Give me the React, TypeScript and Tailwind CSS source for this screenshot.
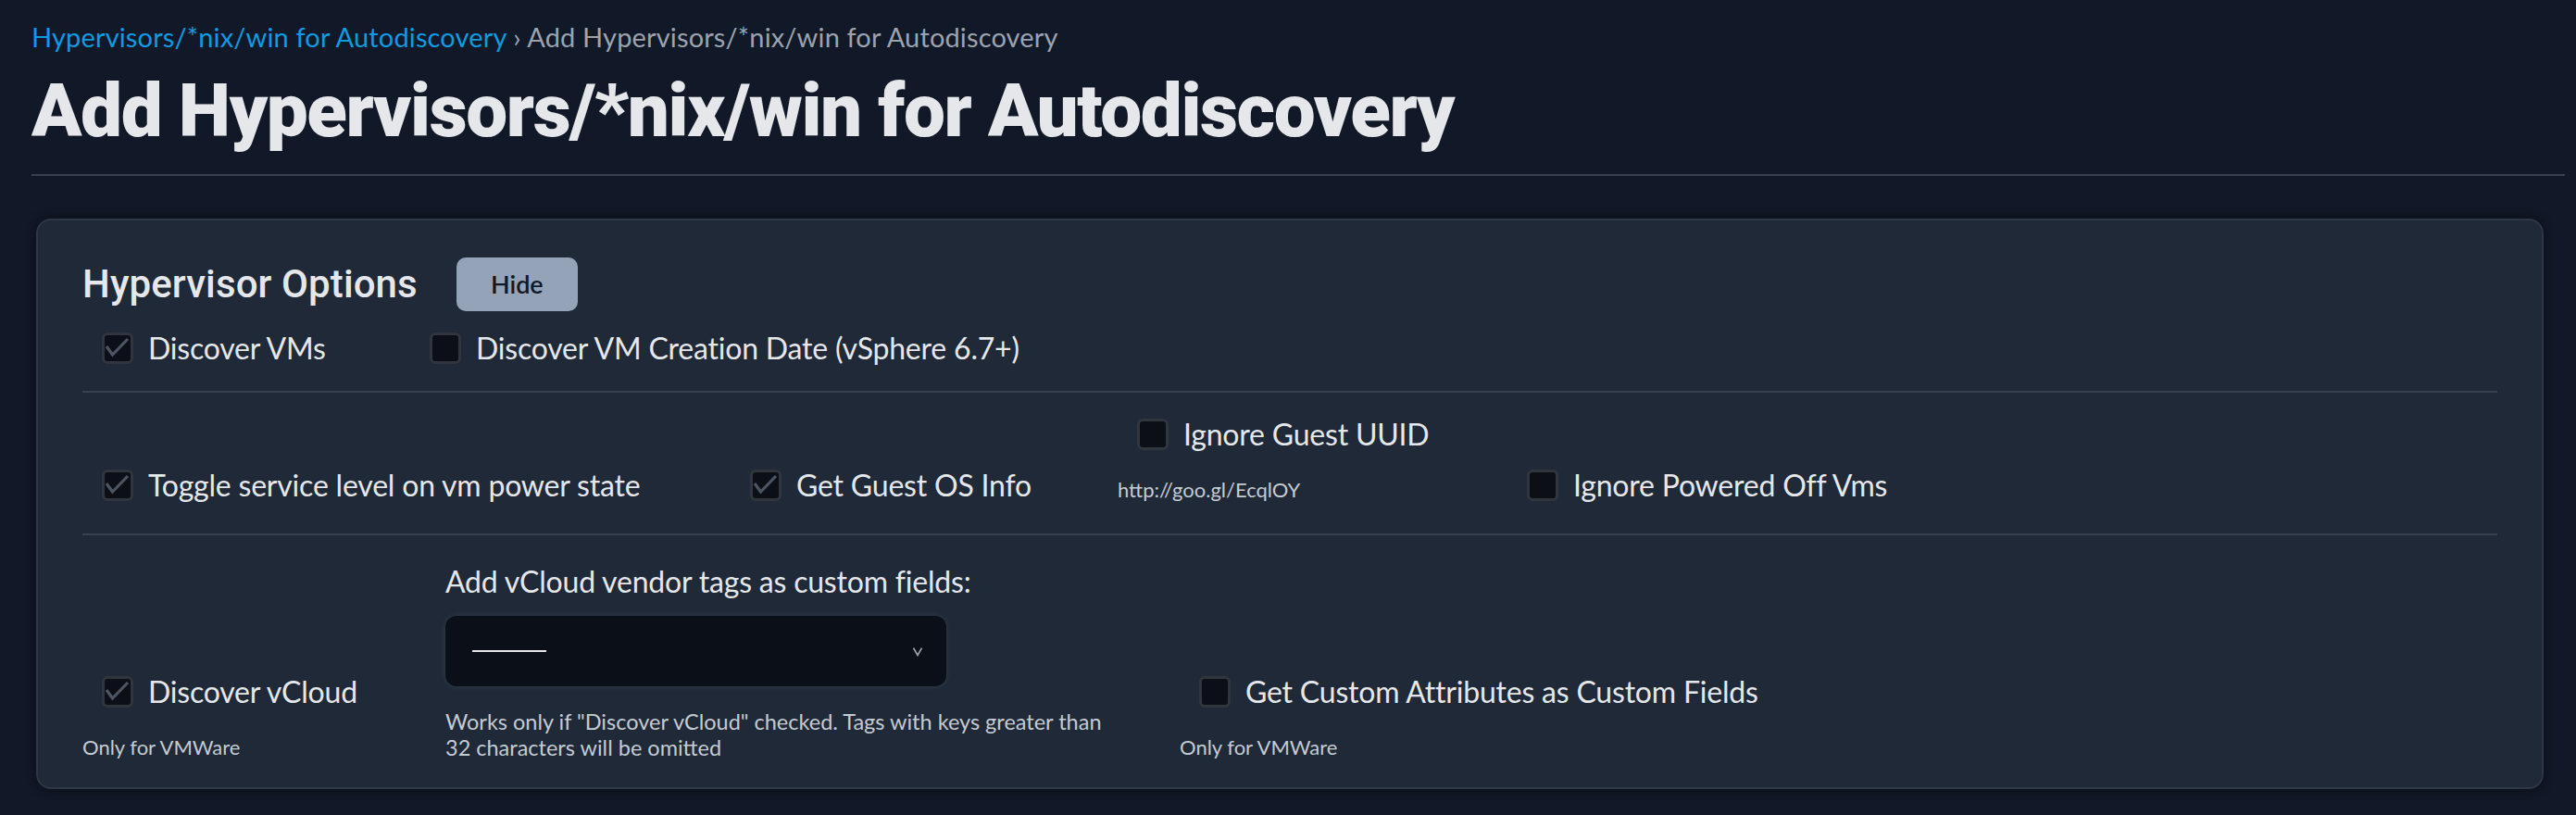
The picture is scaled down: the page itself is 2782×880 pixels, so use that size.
import React from 'react'

const body = { fontFamily: 'Lato, "Noto Sans", sans-serif' }
const head = { fontFamily: 'Roboto, "Open Sans", sans-serif' }

function Box({ checked }: { checked?: boolean }) {
  return (
    <span className="relative flex h-[34px] w-[34px] shrink-0 items-center justify-center rounded-[6px] border-[3px] border-[#30353e] bg-[#0c1016]">
      {checked && (
        <svg viewBox="0 0 34 34" className="absolute -left-[3px] -top-[3px] h-[34px] w-[34px]">
          <path d="M5 15 L11.5 24 L28 7" fill="none" stroke="#4b5563" strokeWidth="3.2" />
        </svg>
      )}
    </span>
  )
}

function Check({ label, checked }: { label: string; checked?: boolean }) {
  return (
    <label className="flex items-center gap-[16px] pl-[21px] text-[32px] leading-[34px] tracking-[-0.2px] text-[#e5e7eb]">
      <Box checked={checked} />
      <span>{label}</span>
    </label>
  )
}

export default function App() {
  return (
    <div className="min-h-screen bg-[#111827] pl-[34px] pr-[12px] pt-[20px]" style={body}>
      {/* breadcrumb */}
      <div className="text-[29px] leading-[40px] tracking-[0.15px]">
        <span className="text-[#0f9be0]">Hypervisors/*nix/win for Autodiscovery</span>
        <span className="text-[#9ca3af]"> › Add Hypervisors/*nix/win for Autodiscovery</span>
      </div>
      <h1 className="mt-[10px] text-[80px] font-black leading-[100px] tracking-[-1.4px] text-[#e5e7eb]" style={head}>
        Add Hypervisors/*nix/win for Autodiscovery
      </h1>
      <div className="mt-[18px] h-[2px] bg-[#374151]" />

      {/* card */}
      <div className="ml-[5px] mr-[23px] mt-[46px] rounded-[16px] border-2 border-[#2f3746] bg-[#1f2937] px-[48px] pb-[29px] pt-[40px] shadow-[0_0_12px_rgba(0,0,0,0.45)]">
        <div className="flex items-center gap-[42px]">
          <h2 className="text-[42px] font-medium leading-[50px] tracking-[0.1px] text-[#e5e7eb]" style={head}>
            Hypervisor Options
          </h2>
          <button className="h-[58px] w-[131px] rounded-[10px] bg-[#94a3b8] text-[27px] font-semibold text-[#111827]">
            Hide
          </button>
        </div>
        <div className="mt-[23px] flex">
          <div className="w-[354px]"><Check label="Discover VMs" checked /></div>
          <Check label="Discover VM Creation Date (vSphere 6.7+)" />
        </div>
        <div className="mt-[29px] h-[2px] bg-[#374151]" />

        {/* row 2 */}
        <div className="flex items-end pb-[35px] pt-[28px]">
          <div className="w-[700px]"><Check label="Toggle service level on vm power state" checked /></div>
          <div className="w-[418px]"><Check label="Get Guest OS Info" checked /></div>
          <div className="flex w-[421px] flex-col">
            <Check label="Ignore Guest UUID" />
            <span className="mt-[31px] text-[22px] leading-[24px] text-[#c5cbd3]">http://goo.gl/EcqlOY</span>
          </div>
          <div><Check label="Ignore Powered Off Vms" /></div>
        </div>
        <div className="h-[2px] bg-[#374151]" />

        {/* row 3 */}
        <div className="flex items-end pt-[33px]">
          <div className="flex w-[392px] flex-col">
            <Check label="Discover vCloud" checked />
            <span className="mt-[29px] text-[22px] leading-[28px] text-[#c5cbd3]">Only for VMWare</span>
          </div>
          <div className="flex w-[793px] flex-col">
            <span className="text-[32px] leading-[34px] tracking-[-0.2px] text-[#e5e7eb]">Add vCloud vendor tags as custom fields:</span>
            <div className="mt-[20px] flex h-[76px] w-[541px] items-center justify-between rounded-[12px] bg-[#0b0f17] pl-[29px] pr-[22px] shadow-[0_0_6px_rgba(148,163,184,0.18)]">
              <span className="block h-[2px] w-[80px] bg-[#e5e7eb]" />
              <svg viewBox="0 0 16 16" className="h-[18px] w-[18px]">
                <path d="M4 5 L8 12 L12 5" fill="none" stroke="#9ca3af" strokeWidth="1.5" />
              </svg>
            </div>
            <p className="mt-[24px] text-[23.5px] leading-[28px] text-[#c5cbd3]">
              Works only if "Discover vCloud" checked. Tags with keys greater than
              <br />
              32 characters will be omitted
            </p>
          </div>
          <div className="flex flex-col">
            <Check label="Get Custom Attributes as Custom Fields" />
            <span className="mt-[29px] text-[22px] leading-[28px] text-[#c5cbd3]">Only for VMWare</span>
          </div>
        </div>
      </div>
    </div>
  )
}
